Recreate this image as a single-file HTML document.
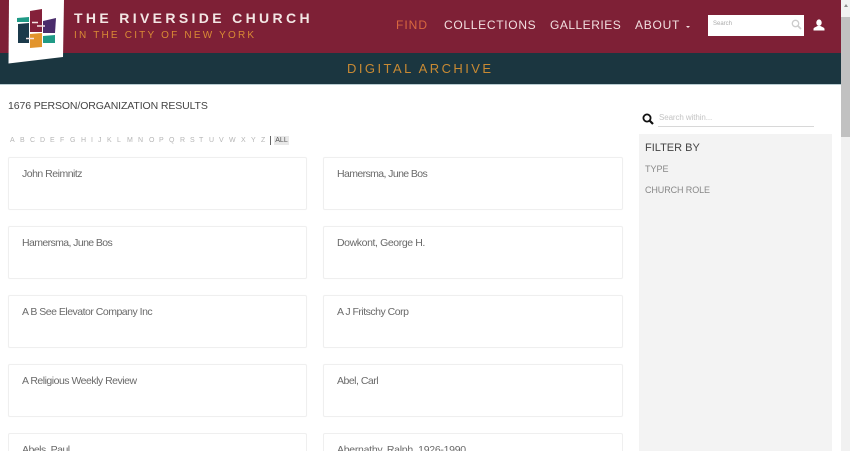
<!DOCTYPE html>
<html><head><meta charset="utf-8"><title>The Riverside Church Digital Archive</title>
<style>
html,body{margin:0;padding:0;width:850px;height:451px;overflow:hidden;background:#fff;font-family:"Liberation Sans",sans-serif}
#page{position:relative;width:850px;height:451px;overflow:hidden;background:#fff}
.a{position:absolute;white-space:nowrap;line-height:1}
#hdr{position:absolute;left:0;top:0;width:841px;height:53px;background:#7e2036}
#sub{position:absolute;left:0;top:53px;width:841px;height:31px;background:#1b3640}
#line{position:absolute;left:0;top:84px;width:841px;height:1px;background:#b9ccd1}
#track{position:absolute;left:841px;top:0;width:9px;height:451px;background:#f1f1f1}
#thumb{position:absolute;left:841px;top:17px;width:9px;height:120px;background:#c1c1c1}
.nav{font-size:12px;color:#f2dfe0;top:19px}
.card{position:absolute;width:297px;height:51px;border:1px solid #efefef;border-radius:2px;background:#fff;box-shadow:0 0 1px #f4f4f4}
.card.r{width:298px}
.card.b{height:17px;border-bottom:0;border-radius:2px 2px 0 0;box-shadow:none;overflow:hidden}
.card span{position:absolute;left:13px;top:10px;font-size:10.5px;color:#6a6a6a;line-height:13px;white-space:nowrap;letter-spacing:-.5px}
.l{font-size:7px;color:#b5b5b5;top:137px}
</style></head><body><div id="page">
<div id="hdr"></div><div id="sub"></div><div id="line"></div>
<div id="track"></div><div id="thumb"></div>
<div style="position:absolute;left:843.500px;top:4px;border-left:2px solid transparent;border-right:2px solid transparent;border-bottom:3px solid #8a8a8a"></div>
<svg style="position:absolute;left:0;top:0" width="80" height="70">
<polygon points="9,0 64,0 63,57 8.500,63.500" fill="#fff"/>
<polygon points="17,18 29,17 29,22 17,22" fill="#1f9a86"/>
<polygon points="18,24 29,23 29,43 18,43" fill="#1b3a4b"/>
<polygon points="30,11 42,9 42,32 30,32" fill="#84203a"/>
<polygon points="43,21 56,18 55,33 43,33" fill="#4a2c6b"/>
<polygon points="30,34 42,33 42,47 30,48" fill="#e2942c"/>
<polygon points="43,36 55,35 55,43 43,43" fill="#1f9a86"/>
<path d="M26 38.500H34M32 22.500H38M37 26H45" stroke="#f4e4e4" stroke-width="1.500"/>
</svg>
<div class="a" style="left:74px;top:11px;font-size:14px;font-weight:bold;letter-spacing:3.35px;color:#f3e6e4">THE RIVERSIDE CHURCH</div>
<div class="a" style="left:74px;top:31px;font-size:10px;letter-spacing:2.2px;color:#d98a35">IN THE CITY OF NEW YORK</div>
<div class="a nav" style="left:396px;color:#d9683f;letter-spacing:1px">FIND</div>
<div class="a nav" style="left:444px;letter-spacing:.7px">COLLECTIONS</div>
<div class="a nav" style="left:550px;letter-spacing:.5px">GALLERIES</div>
<div class="a nav" style="left:635px;letter-spacing:.75px">ABOUT</div>
<div style="position:absolute;left:686px;top:26px;border-left:2.500px solid transparent;border-right:2.500px solid transparent;border-top:2.500px solid #f2dfe0"></div>
<div style="position:absolute;left:708px;top:15px;width:96px;height:21px;background:#fff"></div>
<div class="a" style="left:713px;top:21px;font-size:6px;color:#aaa">Search</div>
<svg style="position:absolute;left:791px;top:19px" width="11" height="11" viewBox="0 0 11 11"><circle cx="4.500" cy="4.500" r="3.200" fill="none" stroke="#ccc" stroke-width="1.300"/><path d="M7 7L10 10" stroke="#ccc" stroke-width="1.600"/></svg>
<svg style="position:absolute;left:813px;top:19px" width="12" height="12" viewBox="0 0 12 12"><ellipse cx="6" cy="3.700" rx="2.700" ry="3.300" fill="#fff"/><path d="M0.500 11.500V10C0.500 8.500 3 8 4.500 7H7.500C9 8 11.500 8.500 11.500 10V11.500Z" fill="#fff"/></svg>
<div class="a" style="left:347px;top:62px;font-size:13px;letter-spacing:2.45px;color:#c98a33">DIGITAL ARCHIVE</div>
<div class="a" style="left:8px;top:101px;font-size:10.500px;color:#444;letter-spacing:-.11px">1676 PERSON/ORGANIZATION RESULTS</div>
<div class="a l" style="left:10px">A</div><div class="a l" style="left:20px">B</div><div class="a l" style="left:30px">C</div><div class="a l" style="left:40px">D</div><div class="a l" style="left:50px">E</div><div class="a l" style="left:60px">F</div><div class="a l" style="left:70px">G</div><div class="a l" style="left:81px">H</div><div class="a l" style="left:91px">I</div><div class="a l" style="left:98px">J</div><div class="a l" style="left:107px">K</div><div class="a l" style="left:117px">L</div><div class="a l" style="left:127px">M</div><div class="a l" style="left:138px">N</div><div class="a l" style="left:149px">O</div><div class="a l" style="left:159px">P</div><div class="a l" style="left:169px">Q</div><div class="a l" style="left:180px">R</div><div class="a l" style="left:190px">S</div><div class="a l" style="left:199px">T</div><div class="a l" style="left:209px">U</div><div class="a l" style="left:219px">V</div><div class="a l" style="left:229px">W</div><div class="a l" style="left:241px">X</div><div class="a l" style="left:251px">Y</div><div class="a l" style="left:261px">Z</div>
<div style="position:absolute;left:270px;top:136px;width:1px;height:9px;background:#666"></div>
<div class="a" style="left:274px;top:136px;width:15px;height:9px;background:#e8e8e8;font-size:7px;line-height:9px;color:#555;text-align:center">ALL</div>
<div class="card" style="left:8px;top:157px"><span>John Reimnitz</span></div>
<div class="card r" style="left:323px;top:157px"><span style="letter-spacing:-.6px">Hamersma, June Bos</span></div>
<div class="card" style="left:8px;top:226px"><span style="letter-spacing:-.6px">Hamersma, June Bos</span></div>
<div class="card r" style="left:323px;top:226px"><span style="letter-spacing:-.4px">Dowkont, George H.</span></div>
<div class="card" style="left:8px;top:295px"><span>A B See Elevator Company Inc</span></div>
<div class="card r" style="left:323px;top:295px"><span>A J Fritschy Corp</span></div>
<div class="card" style="left:8px;top:364px"><span>A Religious Weekly Review</span></div>
<div class="card r" style="left:323px;top:364px"><span>Abel, Carl</span></div>
<div class="card b" style="left:8px;top:433px"><span>Abels, Paul</span></div>
<div class="card r b" style="left:323px;top:433px"><span style="letter-spacing:-.28px">Abernathy, Ralph, 1926-1990</span></div>
<svg style="position:absolute;left:642px;top:113px" width="12" height="12" viewBox="0 0 12 12"><circle cx="5" cy="5" r="3.600" fill="none" stroke="#111" stroke-width="1.800"/><path d="M7.500 7.500L11 11" stroke="#111" stroke-width="2.200"/></svg>
<div class="a" style="left:659px;top:114px;font-size:8px;color:#c4c4c4;letter-spacing:-.1px">Search within...</div>
<div style="position:absolute;left:658px;top:126px;width:156px;height:1px;background:#d8d8d8"></div>
<div style="position:absolute;left:639px;top:134px;width:193px;height:317px;background:#f3f3f3"></div>
<div class="a" style="left:645px;top:143px;font-size:11px;color:#444">FILTER BY</div>
<div class="a" style="left:645px;top:165px;font-size:9px;color:#888">TYPE</div>
<div class="a" style="left:645px;top:186px;font-size:9px;color:#888;letter-spacing:-.1px">CHURCH ROLE</div>
</div></body></html>
